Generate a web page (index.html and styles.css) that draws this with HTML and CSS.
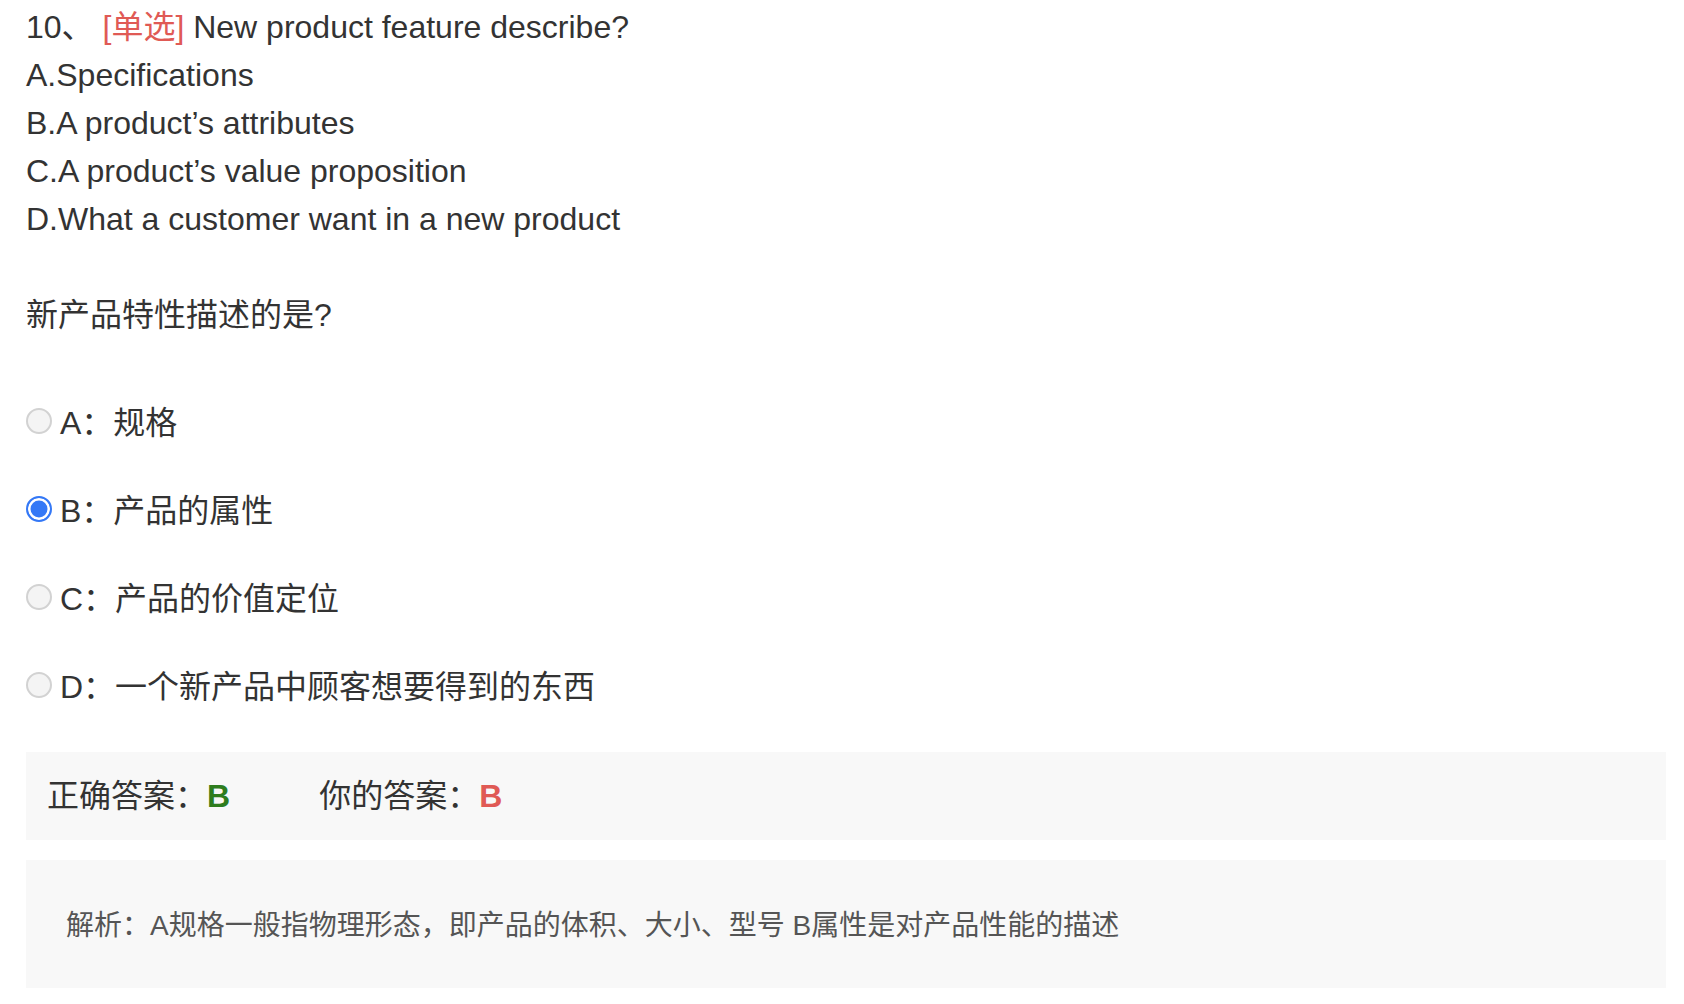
FILE: index.html
```html
<!DOCTYPE html>
<html lang="zh-CN">
<head>
<meta charset="utf-8">
<title>Question 10</title>
<link rel="stylesheet" href="styles.css">
</head>
<body>
<div class="page">
  <div class="stem">
    <div class="line">10、 <span class="type">[单选]</span> New product feature describe?</div>
    <div class="line">A.Specifications</div>
    <div class="line">B.A product’s attributes</div>
    <div class="line">C.A product’s value proposition</div>
    <div class="line">D.What a customer want in a new product</div>
    <div class="line cn-title">新产品特性描述的是?</div>
  </div>
  <div class="options">
    <div class="option"><span class="radio"></span><span class="opt-text">A：规格</span></div>
    <div class="option"><span class="radio checked"></span><span class="opt-text">B：产品的属性</span></div>
    <div class="option"><span class="radio"></span><span class="opt-text">C：产品的价值定位</span></div>
    <div class="option"><span class="radio"></span><span class="opt-text">D：一个新产品中顾客想要得到的东西</span></div>
  </div>
  <div class="answer-box">
    <div class="ans correct-group">正确答案：<span class="correct">B</span></div>
    <div class="ans">你的答案：<span class="mine">B</span></div>
  </div>
  <div class="explain-box">解析：A规格一般指物理形态，即产品的体积、大小、型号 B属性是对产品性能的描述</div>
</div>
</body>
</html>
```
FILE: styles.css
```css
html, body {
  margin: 0;
  padding: 0;
  background: #ffffff;
}
body {
  font-family: "Liberation Sans", "Noto Sans CJK SC", sans-serif;
  color: #333333;
  font-size: 32px;
  line-height: 48px;
}
.page {
  padding: 3px 18px 0 26px;
}
.line {
  height: 48px;
  white-space: nowrap;
}
.type {
  color: #e05a55;
}
.cn-title {
  margin-top: 48px;
}
.options {
  margin-top: 39px;
}
.option {
  display: flex;
  align-items: center;
  height: 88px;
}
.opt-text {
  position: relative;
  top: 1px;
}
.radio {
  box-sizing: border-box;
  width: 26px;
  height: 26px;
  border-radius: 50%;
  background: #f4f4f4;
  border: 2px solid #d2d2d2;
  margin-right: 8px;
  flex: none;
  position: relative;
  top: -1px;
}
.radio.checked {
  background: #3478f6;
  border: 2.5px solid #3478f6;
  box-shadow: inset 0 0 0 2.5px #ffffff;
}
.answer-box {
  margin-top: 22px;
  background: #f8f8f8;
  height: 88px;
  padding: 0 21px;
  display: flex;
  align-items: center;
}
.ans {
  white-space: nowrap;
}
.correct-group {
  margin-right: 89px;
}
.correct {
  color: #2e7d1e;
  font-weight: bold;
}
.mine {
  color: #e05a55;
  font-weight: bold;
}
.explain-box {
  margin-top: 20px;
  background: #f8f8f8;
  height: 128px;
  box-sizing: border-box;
  padding: 42px 40px 0;
  font-size: 28px;
  line-height: 48px;
  color: #555555;
  white-space: nowrap;
}
```
